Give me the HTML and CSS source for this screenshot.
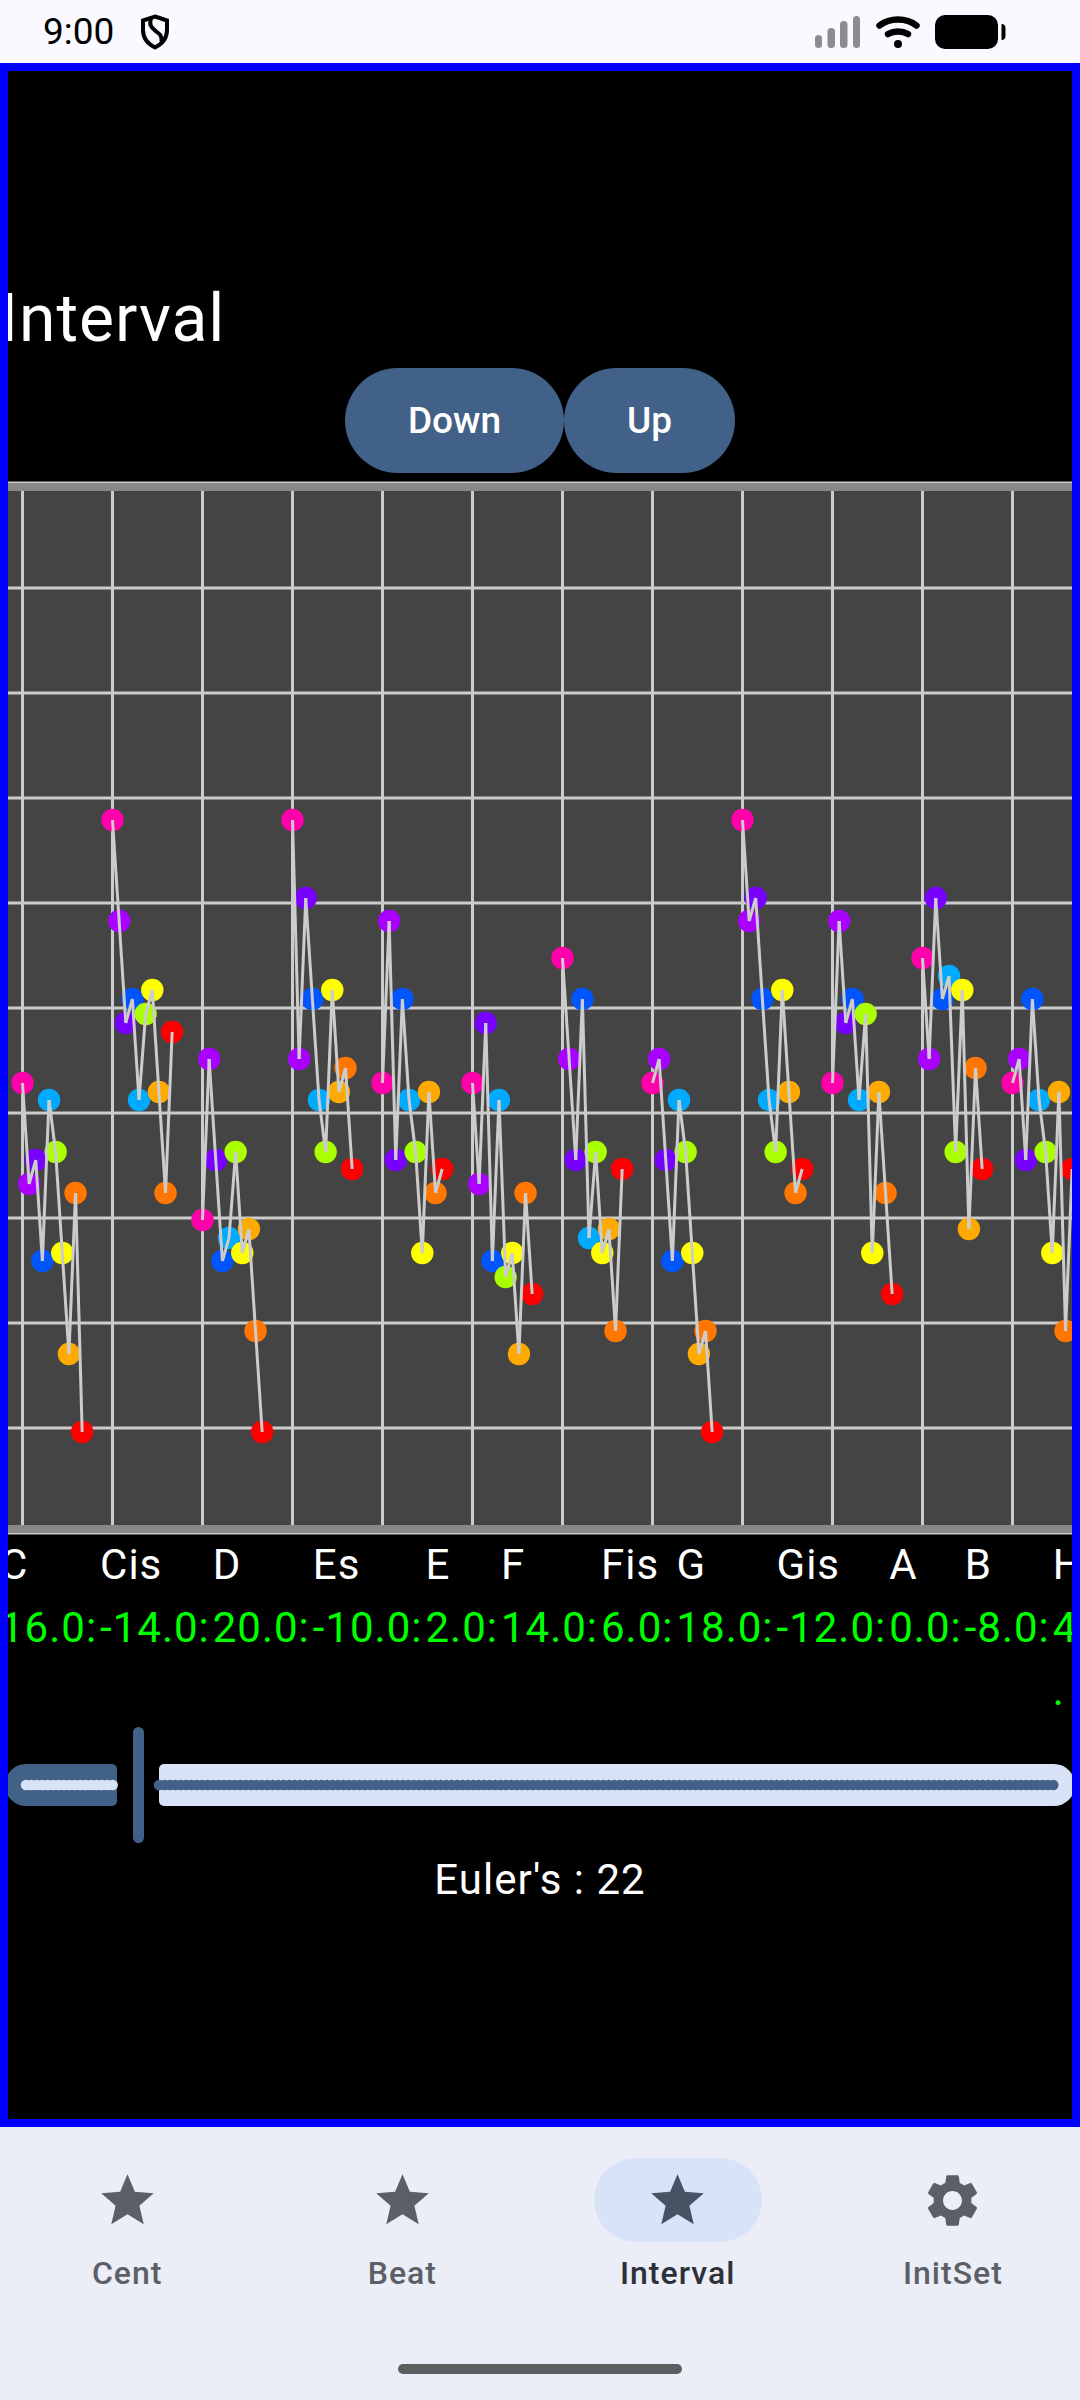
FILE: index.html
```html
<!DOCTYPE html>
<html lang="en">
<head>
<meta charset="utf-8">
<meta name="viewport" content="width=device-width, initial-scale=1">
<title>Interval</title>
<link rel="stylesheet" href="styles.css">
</head>
<body>
<header class="status">
  <div class="status-side">
    <time class="clock">9:00</time>
    <svg class="shield" width="32" height="36" viewBox="0 0 32 36" aria-hidden="true">
      <path d="M16 2.500 28 6.500V16c0 8-5 14-12 17.500C9 30 4 24 4 16V6.500z"/>
      <path d="M12 4c-2 7 0 9 4 12.500s7 4 6.500 11"/>
    </svg>
  </div>
  <div class="status-side status-icons">
    <svg width="46" height="34" viewBox="0 0 46 34" fill="#8c8b8f" aria-hidden="true">
      <rect x="0" y="20" width="7" height="13" rx="3.500"/>
      <rect x="12.500" y="13" width="7.500" height="20" rx="3.500"/>
      <rect x="25" y="6" width="7.500" height="27" rx="3.500"/>
      <rect x="38" y="1" width="7" height="32" rx="3.500"/>
    </svg>
    <svg width="44" height="34" viewBox="0 0 44 34" fill="none" stroke="#000" stroke-width="6.500" stroke-linecap="round" aria-hidden="true">
      <path d="M3.500 10.500C14 2.500 30 2.500 40.500 10.500"/>
      <path d="M12 19c6-3.500 14-3.500 20 0"/>
      <circle cx="22" cy="29" r="4" fill="#000" stroke="none"/>
    </svg>
    <svg width="71" height="34" viewBox="0 0 71 34" aria-hidden="true">
      <rect width="63" height="34" rx="10"/>
      <path d="M66.500 9c3 0 4 2 4 4v8c0 2-1 4-4 4z"/>
    </svg>
  </div>
</header>

<main class="screen">
  <h1 class="title">Interval</h1>
  <div class="actions">
    <button type="button" class="action">Down</button>
    <button type="button" class="action">Up</button>
  </div>
  <svg class="chart" id="chart" role="img" aria-label="Interval chart"></svg>
  <div class="notes">
    <div class="note"><span>C</span><span class="cents">16.0:</span></div>
    <div class="note"><span>Cis</span><span class="cents">-14.0:</span></div>
    <div class="note"><span>D</span><span class="cents">20.0:</span></div>
    <div class="note"><span>Es</span><span class="cents">-10.0:</span></div>
    <div class="note"><span>E</span><span class="cents">2.0:</span></div>
    <div class="note"><span>F</span><span class="cents">14.0:</span></div>
    <div class="note"><span>Fis</span><span class="cents">6.0:</span></div>
    <div class="note"><span>G</span><span class="cents">18.0:</span></div>
    <div class="note"><span>Gis</span><span class="cents">-12.0:</span></div>
    <div class="note"><span>A</span><span class="cents">0.0:</span></div>
    <div class="note"><span>B</span><span class="cents">-8.0:</span></div>
    <div class="note"><span>H</span><span class="cents">4<br>.</span></div>
  </div>
  <div class="slider">
    <div class="tracks">
      <div class="track track-on" style="flex-grow: 112"><svg class="ticks"><line x1="0" y1="5" x2="100%" y2="5"/></svg></div>
      <div class="track track-off" style="flex-grow: 916"><svg class="ticks"><line x1="0" y1="5" x2="100%" y2="5"/></svg></div>
    </div>
    <input class="range" id="euler" type="range" min="0" max="177" value="22">
  </div>
  <label class="reading" for="euler">Euler's : 22</label>
</main>

<nav class="nav">
  <div class="tabs">
    <a class="tab" href="#cent"><span class="pill"><svg class="icon" viewBox="0 0 24 24"><path d="M12 17.270 18.180 21l-1.640-7.030L22 9.240l-7.190-.610L12 2 9.190 8.630 2 9.240l5.460 4.730L5.820 21z"/></svg></span>Cent</a>
    <a class="tab" href="#beat"><span class="pill"><svg class="icon" viewBox="0 0 24 24"><path d="M12 17.270 18.180 21l-1.640-7.030L22 9.240l-7.190-.610L12 2 9.190 8.630 2 9.240l5.460 4.730L5.820 21z"/></svg></span>Beat</a>
    <a class="tab tab-on" href="#interval" aria-current="page"><span class="pill"><svg class="icon" viewBox="0 0 24 24"><path d="M12 17.270 18.180 21l-1.640-7.030L22 9.240l-7.190-.610L12 2 9.190 8.630 2 9.240l5.460 4.730L5.820 21z"/></svg></span>Interval</a>
    <a class="tab" href="#initset"><span class="pill"><svg class="icon" viewBox="0 0 24 24"><path d="M19.140 12.940c.04-.3.06-.61.06-.94 0-.32-.02-.64-.07-.94l2.030-1.580c.18-.14.23-.41.12-.61l-1.920-3.320c-.12-.22-.37-.29-.59-.22l-2.390.96c-.5-.38-1.030-.7-1.620-.94L14.400 2.810c-.04-.24-.24-.41-.48-.41h-3.840c-.24 0-.43.17-.47.41L9.250 5.350C8.660 5.590 8.120 5.920 7.630 6.290L5.240 5.330c-.22-.08-.47 0-.59.22L2.740 8.870c-.12.21-.08.47.12.61l2.030 1.580C4.840 11.360 4.800 11.690 4.800 12s.02.64.07.94l-2.030 1.580c-.18.14-.23.41-.12.61l1.920 3.320c.12.22.37.29.59.22l2.390-.96c.5.38 1.030.7 1.620.94l.36 2.540c.05.24.24.41.48.41h3.840c.24 0 .44-.17.47-.41l.36-2.540c.59-.24 1.130-.56 1.620-.94l2.390.96c.22.08.47 0 .59-.22l1.920-3.320c.12-.22.07-.47-.12-.61zM12 15.600c-1.980 0-3.600-1.620-3.600-3.600s1.620-3.600 3.600-3.600 3.600 1.620 3.600 3.600-1.620 3.600-3.600 3.600z"/></svg></span>InitSet</a>
  </div>
  <div class="home-bar"></div>
</nav>
<script src="script.js"></script>
</body>
</html>
```

FILE: styles.css
```css
* {
  box-sizing: border-box;
}

body {
  margin: 0;
  min-height: 100vh;
  display: flex;
  flex-direction: column;
  font-family: Roboto, "Noto Sans", sans-serif;
  font-size: 42px;
  line-height: 63px;
  background: #ebeef6;
}

/* Status bar */
.status {
  height: 63px;
  padding: 0 74px 0 43px;
  display: flex;
  align-items: center;
  justify-content: space-between;
  background: #faf9ff;
}

.status-side {
  display: flex;
  align-items: center;
  gap: 25px;
}

.status-icons {
  gap: 15px;
}

.clock {
  font-size: 37px;
  line-height: 60px;
}

.shield {
  fill: none;
  stroke: #000;
  stroke-width: 4;
}

/* Main screen: the frame is painted over the content's edges */
.screen {
  flex: 1;
  display: flex;
  flex-direction: column;
  justify-content: center;
  overflow: hidden;
  color: #fff;
  background: #000;
  outline: 8px solid #00f;
  outline-offset: -8px;
}

.title {
  margin: 0;
  font-size: 66px;
  font-weight: 400;
  line-height: 80px;
  letter-spacing: 1px;
}

.actions {
  display: flex;
  justify-content: center;
  padding: 9px 0 8px;
}

.action {
  height: 105px;
  padding: 0 63px;
  border: 0;
  border-radius: 53px;
  font: 500 37px/53px Roboto, "Noto Sans", sans-serif;
  color: #fff;
  background: #426188;
}

.chart {
  display: block;
  width: 100%;
  height: 1054px;
  margin-bottom: -2px;
}

.chart .plot {
  fill: #444;
}

.chart .grid,
.chart .trace {
  fill: none;
  stroke: #ccc;
  stroke-width: 3;
}

.chart .edge {
  fill: #888;
}

.notes {
  display: flex;
  height: 189px;
  letter-spacing: 1px;
}

.note {
  display: flex;
  flex-direction: column;
  padding-right: 3px;
}

.cents {
  color: #0f0;
}

/* Slider: the input shares one grid cell with the tracks */
.slider {
  display: grid;
  align-items: center;
  height: 126px;
}

.tracks,
.range {
  grid-area: 1 / 1;
}

.tracks {
  display: flex;
  gap: 42px;
  padding: 0 5px;
}

.track {
  display: flex;
  align-items: center;
  flex-basis: 0;
  min-width: 0;
  height: 42px;
}

.track-on {
  border-radius: 21px 5px 5px 21px;
  background: #426188;
  stroke: #d8e3f8;
}

.track-off {
  border-radius: 5px 21px 21px 5px;
  background: #d8e3f8;
  stroke: #426188;
}

.ticks {
  flex: 1;
  min-width: 0;
  height: 10px;
  overflow: visible;
  stroke-width: 10.5;
  stroke-linecap: round;
  stroke-dasharray: 0 5.42;
}

.track-on .ticks {
  margin-left: 21px;
}

.track-off .ticks {
  margin-right: 21px;
}

.range {
  width: 100%;
  height: 126px;
  margin: 0;
  appearance: none;
  background: none;
}

.range::-webkit-slider-thumb {
  appearance: none;
  width: 11px;
  height: 116px;
  border-radius: 6px;
  background: #426188;
}

.reading {
  text-align: center;
  letter-spacing: 1px;
}

/* Bottom navigation */
.nav {
  padding: 31px 0 26px;
}

.tabs {
  display: grid;
  grid-template-columns: repeat(4, 1fr);
  gap: 21px;
}

.tab {
  display: flex;
  flex-direction: column;
  align-items: center;
  gap: 10px;
  font-size: 32px;
  font-weight: 500;
  line-height: 42px;
  letter-spacing: 1px;
  color: #5c5f67;
  text-decoration: none;
}

.pill {
  display: flex;
  align-items: center;
  justify-content: center;
  width: 168px;
  height: 84px;
  border-radius: 42px;
}

.icon {
  width: 63px;
  height: 63px;
  fill: currentColor;
}

.tab-on {
  color: #2d3038;
}

.tab-on .pill {
  color: #475264;
  background: #d8e3f8;
}

.home-bar {
  width: 284px;
  height: 10px;
  margin: 70px auto 0;
  border-radius: 5px;
  background: #5d5f61;
}
```

FILE: script.js
```js
const NS = "http://www.w3.org/2000/svg";
const chart = document.getElementById("chart");

const colors = ["#ff00aa", "#aa00ff", "#7700ff", "#0055ff", "#00aaff",
                "#aaff00", "#ffff00", "#ffaa00", "#ff7700", "#ff0000"];

// One row per note, from C to H: the height of each interval's point.
const notes = [
  [602, 703, 679, 780, 619, 671, 772, 873, 712, 951],
  [339, 440, 542, 518, 619, 533, 509, 611, 712, 551],
  [739, 578, 679, 780, 757, 671, 772, 748, 850, 951],
  [339, 578, 417, 518, 619, 671, 509, 611, 587, 688],
  [602, 440, 679, 518, 619, 671, 772, 611, 712, 688],
  [602, 703, 542, 780, 619, 796, 772, 873, 712, 813],
  [477, 578, 679, 518, 757, 671, 772, 748, 850, 688],
  [602, 578, 679, 780, 619, 671, 772, 873, 850, 951],
  [339, 440, 417, 518, 619, 671, 509, 611, 712, 688],
  [602, 440, 542, 518, 619, 533, 772, 611, 712, 813],
  [477, 578, 417, 518, 495, 671, 509, 748, 587, 688],
  [602, 578, 679, 518, 619, 671, 772, 611, 850, 688]
];

const firstX = 22.5;
const noteStep = 90;
const pointStep = 6.63;
const top0 = 2;
const plotHeight = 1050;

function add(name, attrs) {
  const el = document.createElementNS(NS, name);
  for (const key in attrs) el.setAttribute(key, attrs[key]);
  chart.appendChild(el);
}

add("rect", { class: "plot", x: 0, y: top0, width: "100%", height: plotHeight });
for (let y = 0; y <= plotHeight; y += 105) {
  add("line", { class: "grid", x1: 0, x2: "100%", y1: top0 + y, y2: top0 + y });
}
notes.forEach((_, i) => {
  const x = firstX + i * noteStep;
  add("line", { class: "grid", x1: x, x2: x, y1: top0, y2: top0 + plotHeight });
});
add("rect", { class: "edge", x: 0, y: top0, width: "100%", height: 8 });
add("rect", { class: "edge", x: 0, y: top0 + plotHeight - 8, width: "100%", height: 8 });

notes.forEach((points, i) => {
  const xs = points.map((_, j) => firstX + i * noteStep + j * pointStep);
  points.forEach((y, j) => add("circle", { cx: xs[j], cy: y, r: 11.2, fill: colors[j] }));
  for (let j = 1; j < points.length; j++) {
    add("line", { class: "trace", x1: xs[j - 1], y1: points[j - 1], x2: xs[j], y2: points[j] });
  }
});
```
